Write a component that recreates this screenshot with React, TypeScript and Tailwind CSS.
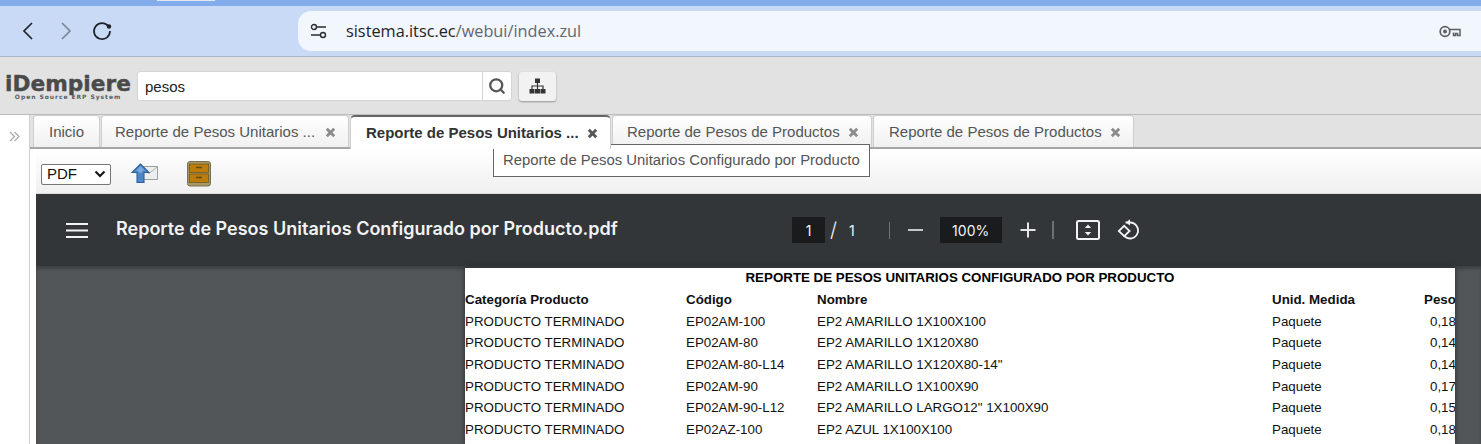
import { Search } from "lucide-react";

const rows = [
  ["EP02AM-100", "EP2 AMARILLO 1X100X100", "0,18", "h-[22px]"],
  ["EP02AM-80", "EP2 AMARILLO 1X120X80", "0,14", "h-[21px]"],
  ["EP02AM-80-L14", "EP2 AMARILLO 1X120X80-14\"", "0,14", "h-[22px]"],
  ["EP02AM-90", "EP2 AMARILLO 1X100X90", "0,17", "h-[22px]"],
  ["EP02AM-90-L12", "EP2 AMARILLO LARGO12\" 1X100X90", "0,15", "h-[21px]"],
  ["EP02AZ-100", "EP2 AZUL 1X100X100", "0,18", "h-[22px]"],
];

const tabs = [
  { label: "Reporte de Pesos Unitarios ...", width: "w-[248px]", pad: "pl-[13px]", active: false },
  { label: "Reporte de Pesos Unitarios ...", width: "w-[261px]", pad: "pl-[15px]", active: true },
  { label: "Reporte de Pesos de Productos", width: "w-[260px]", pad: "pl-[14px]", active: false },
  { label: "Reporte de Pesos de Productos", width: "w-[261px]", pad: "pl-[15px]", active: false },
];

function CloseMark({ dark }: { dark: boolean }) {
  return (
    <svg width="11" height="11" viewBox="0 0 11 11" className="shrink-0">
      <path d="M1.8 1.8l7.4 7.4M9.2 1.8L1.8 9.2" stroke={dark ? "#555" : "#8c8c8c"} strokeWidth="2.9" />
    </svg>
  );
}

function TreeIcon() {
  return (
    <svg width="17" height="16" viewBox="0 0 17 16">
      <path d="M6 0.5h5v4.5H6zM0.5 11h5v4.5h-5zM6 11h5v4.5H6zM11.500 11h5v4.5h-5z" fill="#333" />
      <path d="M8.500 5v6M3 11V8h11v3" stroke="#333" strokeWidth="1.200" fill="none" />
    </svg>
  );
}

function MailUpIcon() {
  return (
    <svg width="28" height="22" viewBox="0 0 28 22">
      <path d="M9 3.500h17.500v13H9z" fill="#eceff0" stroke="#9b9f9f" />
      <path d="M9.500 4l8.500 6.500L26 4" fill="none" stroke="#a9adad" />
      <path d="M9.500 1L1 9.500h5V19.500h7V9.500h5z" fill="#4c86c6" stroke="#2d5f9e" strokeWidth="1.100" />
      <path d="M9.500 3L5 7.800h2.600v2h3.800v-2H14z" fill="#79a9dc" />
    </svg>
  );
}

function CabinetIcon() {
  return (
    <svg width="24" height="26" viewBox="0 0 24 26">
      <rect x="0.500" y="0.500" width="23" height="24.500" rx="2.500" fill="#a89868" stroke="#77704e" />
      <rect x="2.500" y="3" width="19" height="8.500" fill="#bd7c0c" stroke="#6f5a22" strokeWidth="0.800" />
      <rect x="2.500" y="13" width="19" height="8.500" fill="#bd7c0c" stroke="#6f5a22" strokeWidth="0.800" />
      <path d="M9 6.500h6M9 16.500h6" stroke="#5c4a18" strokeWidth="1.500" />
    </svg>
  );
}

function FitPageIcon() {
  return (
    <svg width="24" height="20" viewBox="0 0 24 20">
      <rect x="1" y="1" width="22" height="18" rx="1.500" fill="none" stroke="#f1f3f4" strokeWidth="2" />
      <path d="M12 4.500l3.200 3.500H8.800zM12 15.500l3.200-3.500H8.800z" fill="#f1f3f4" />
    </svg>
  );
}

function RotateIcon() {
  return (
    <svg width="23" height="22" viewBox="0 0 23 22">
      <path d="M8.500 3.500H13a8 8 0 1 1-5.600 13.700" fill="none" stroke="#f1f3f4" strokeWidth="1.800" />
      <path d="M13 0.300v6.200L9 3.400z" fill="#f1f3f4" />
      <path d="M7.200 6.800l5.400 5.200-5.400 5.200L1.800 12z" fill="#323639" stroke="#f1f3f4" strokeWidth="1.800" />
    </svg>
  );
}

export default function App() {
  return (
    <div className="relative flex h-[444px] w-[1481px] flex-col overflow-hidden bg-[#e2e2e2] font-['Liberation_Sans',sans-serif]">
      {/* browser chrome */}
      <div className="h-[6px] bg-[#83acea]">
        <div className="ml-[157px] h-px w-[58px] bg-[#dfe8f7]" />
      </div>
      <div className="flex h-[51px] items-center border-b border-[#a9b7cf] bg-[#c8daf6] pl-[20px]">
        <svg width="16" height="20" viewBox="0 0 16 20" className="mr-[22px]">
          <path d="M12 2L4 10l8 8" fill="none" stroke="#1f2329" strokeWidth="1.700" />
        </svg>
        <svg width="16" height="20" viewBox="0 0 16 20" className="mr-[18px]">
          <path d="M4 2l8 8-8 8" fill="none" stroke="#7c8594" strokeWidth="1.700" />
        </svg>
        <svg width="20" height="20" viewBox="0 0 20 20" className="mr-[186px]">
          <path d="M16.500 5.500A8 8 0 1 0 18 10" fill="none" stroke="#1f2329" strokeWidth="1.700" />
          <circle cx="17" cy="5.500" r="2.200" fill="#1f2329" />
        </svg>
        <div className="flex h-[40px] flex-1 items-center rounded-l-[13px] bg-[#f2f6fd] pl-[12px] pr-[20px]">
          <svg width="17" height="16" viewBox="0 0 17 16" className="mr-[19px]">
            <circle cx="4" cy="4" r="2.500" fill="none" stroke="#2a2e33" strokeWidth="1.400" />
            <circle cx="13" cy="12" r="2.500" fill="none" stroke="#2a2e33" strokeWidth="1.400" />
            <path d="M7 4h9M1 12h9" stroke="#2a2e33" strokeWidth="1.400" />
          </svg>
          <span className="font-['Open_Sans',sans-serif] text-[16.300px] text-[#1f2329]">
            sistema.itsc.ec<span className="text-[#5f6670]">/webui/index.zul</span>
          </span>
          <svg width="22" height="13" viewBox="0 0 22 13" className="ml-auto">
            <circle cx="6" cy="6.500" r="4.800" fill="none" stroke="#5c5f63" strokeWidth="1.700" />
            <circle cx="6" cy="6.500" r="2" fill="#5c5f63" />
            <path d="M10.500 4.500H21v6h-2.500V8.500h-2v2h-2V7.500" fill="none" stroke="#5c5f63" strokeWidth="1.500" />
          </svg>
        </div>
      </div>

      {/* idempiere header */}
      <div className="flex h-[58px] items-center border-b border-[#bcbcbc] pt-[1px] pl-[5px]">
        <div className="mr-[6px] mt-[2px] flex w-[126px] flex-col items-center font-['DejaVu_Sans',sans-serif]">
          <span className="text-[21.700px] font-bold leading-[20px] text-[#4a4a4a] [-webkit-text-stroke:0.4px_#4a4a4a]">iDempiere</span>
          <span className="text-[6px] font-bold leading-[6px] tracking-[0.95px] text-[#5a5a5a]">Open Source ERP System</span>
        </div>
        <div className="flex h-[30px] w-[375px] items-center rounded-[3px] border border-[#d4d4d4] bg-white">
          <span className="flex-1 pl-[7px] pt-[2px] text-[15px] text-[#222]">pesos</span>
          <div className="flex h-full w-[29px] items-center justify-center border-l border-[#d4d4d4]">
            <Search size={18} strokeWidth={3} className="text-[#555]" />
          </div>
        </div>
        <div className="ml-[7px] flex h-[29px] w-[37px] items-center justify-center rounded-[3px] bg-[#f2f2f2] shadow-[0_1px_2px_rgba(0,0,0,0.35)]">
          <TreeIcon />
        </div>
      </div>

      {/* main */}
      <div className="flex min-h-0 flex-1">
        <div className="flex w-[30px] shrink-0 justify-center border-r border-[#cfcfcf] bg-white pt-[16px]">
          <svg width="11" height="11" viewBox="0 0 11 11">
            <path d="M1 1l4.500 4.500L1 10M5.500 1L10 5.500 5.500 10" fill="none" stroke="#a8a8a8" strokeWidth="1.200" />
          </svg>
        </div>
        <div className="flex min-w-0 flex-1 flex-col">
          {/* tabs */}
          <div className="flex h-[34px] items-end gap-[1px] border-b-2 border-[#a6a6a6] pl-[3px]">
            <div className="flex h-[32px] w-[67px] items-center justify-center rounded-t-[4px] border border-b-0 border-[#cfcfcf] bg-gradient-to-b from-white to-[#f0f0f0] pt-[2px] text-[15px] text-[#555]">
              Inicio
            </div>
            {tabs.map((tab, i) =>
              tab.active ? (
                <div
                  key={i}
                  className={`${tab.width} ${tab.pad} z-10 -mb-[2px] flex h-[34px] items-center justify-between rounded-t-[5px] border border-b-0 border-t-2 border-[#cfcfcf] border-t-[#666] bg-white pr-[12px] text-[15px] font-bold text-[#333]`}
                >
                  <span>{tab.label}</span>
                  <CloseMark dark />
                </div>
              ) : (
                <div
                  key={i}
                  className={`${tab.width} ${tab.pad} flex h-[32px] items-center justify-between rounded-t-[4px] border border-b-0 border-[#cfcfcf] bg-gradient-to-b from-white to-[#f0f0f0] pt-[2px] pr-[12px] text-[15px] text-[#555]`}
                >
                  <span>{tab.label}</span>
                  <CloseMark dark={false} />
                </div>
              ),
            )}
          </div>

          {/* report window */}
          <div className="flex min-h-0 flex-1 flex-col bg-white pl-[6px]">
            <div className="flex h-[45px] items-center border-b border-[#ddd] bg-gradient-to-b from-white to-[#f0f0f0] pt-[6px]">
              <div className="ml-[5px] flex h-[21px] w-[70px] items-center justify-between rounded-[2px] border border-[#767676] bg-white pl-[5px] pr-[4px]">
                <span className="pt-[1px] text-[15px] text-[#111]">PDF</span>
                <svg width="12" height="8" viewBox="0 0 12 8">
                  <path d="M1.500 1.500L6 6l4.500-4.500" fill="none" stroke="#111" strokeWidth="2" />
                </svg>
              </div>
              <div className="ml-[20px]">
                <MailUpIcon />
              </div>
              <div className="ml-[28px]">
                <CabinetIcon />
              </div>
            </div>

            {/* pdf viewer */}
            <div className="flex h-[72px] items-center bg-[#323639] font-['Inter',sans-serif] text-[#f1f3f4]">
              <svg width="22" height="16" viewBox="0 0 22 16" className="ml-[30px]">
                <path d="M0 2h22M0 8.500h22M0 15h22" stroke="#f1f3f4" strokeWidth="2" />
              </svg>
              <span className="mb-[3px] ml-[28px] w-[676px] whitespace-nowrap text-[18px] font-semibold">
                Reporte de Pesos Unitarios Configurado por Producto.pdf
              </span>
              <span className="flex h-[26px] w-[33px] items-center justify-center bg-[#191b1c] text-[14px]">1</span>
              <span className="ml-[5px] text-[20px] font-light">/</span>
              <span className="ml-[12px] text-[14px]">1</span>
              <span className="ml-[34px] h-[17px] w-px bg-[#70757a]" />
              <span className="ml-[18px] h-[2px] w-[15px] bg-[#c4c7c9]" />
              <span className="ml-[17px] flex h-[26px] w-[62px] items-center justify-center bg-[#191b1c] text-[14px]">100%</span>
              <svg width="16" height="16" viewBox="0 0 16 16" className="ml-[18px]">
                <path d="M8 0.500v15M0.500 8h15" stroke="#e4e6e8" strokeWidth="2" />
              </svg>
              <span className="ml-[16px] h-[18px] w-[2px] bg-[#6d7175]" />
              <div className="ml-[22px]">
                <FitPageIcon />
              </div>
              <div className="ml-[17px]">
                <RotateIcon />
              </div>
            </div>

            <div className="flex min-h-0 flex-1 justify-start bg-[#525659] pl-[429px] pr-[26px] pt-[2px] shadow-[inset_0_3px_3px_rgba(0,0,0,0.25)]">
              <div className="w-[990px] overflow-hidden bg-white text-[13.330px] leading-[13px] text-[#111] shadow-[0_0_5px_rgba(0,0,0,0.5)]">
                <div className="h-[20px] pt-[3px] text-center font-bold text-black">
                  REPORTE DE PESOS UNITARIOS CONFIGURADO POR PRODUCTO
                </div>
                <div className="grid h-[22px] grid-cols-[221px_131px_455px_152px_31px] items-center whitespace-nowrap font-bold">
                  <span>Categoría Producto</span>
                  <span>Código</span>
                  <span>Nombre</span>
                  <span>Unid. Medida</span>
                  <span className="overflow-hidden">Peso</span>
                </div>
                {rows.map((row) => (
                  <div key={row[0]} className={`${row[3]} grid grid-cols-[221px_131px_455px_152px_31px] items-center whitespace-nowrap`}>
                    <span>PRODUCTO TERMINADO</span>
                    <span>{row[0]}</span>
                    <span>{row[1]}</span>
                    <span>Paquete</span>
                    <span className="overflow-hidden pl-[6px]">{row[2]}</span>
                  </div>
                ))}
              </div>
            </div>
          </div>
        </div>
      </div>

      {/* tooltip over the tabs */}
      <div className="absolute left-[493px] top-[144px] flex h-[33px] w-[377px] items-center whitespace-nowrap border border-[#666] bg-white pl-[9px] text-[14.900px] text-[#555]">
        Reporte de Pesos Unitarios Configurado por Producto
      </div>
    </div>
  );
}
